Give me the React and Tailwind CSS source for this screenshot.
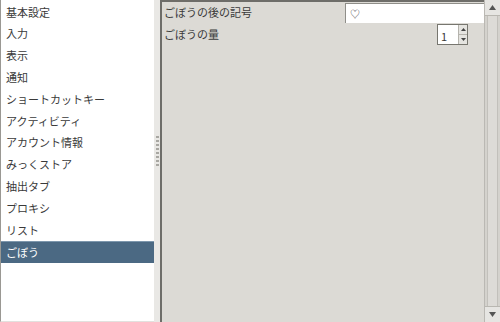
import { ChevronUp, ChevronDown } from "lucide-react";

const items = [
  "基本設定",
  "入力",
  "表示",
  "通知",
  "ショートカットキー",
  "アクティビティ",
  "アカウント情報",
  "みっくストア",
  "抽出タブ",
  "プロキシ",
  "リスト",
  "ごぼう",
];

function Arrow({ up }) {
  return (
    <svg width="7" height="5" viewBox="0 0 7 5">
      {up ? (
        <polygon points="0,5 7,5 3.5,0" fill="#555" />
      ) : (
        <polygon points="0,0 7,0 3.5,5" fill="#555" />
      )}
    </svg>
  );
}

export default function App() {
  const selected = "ごぼう";

  return (
    <div
      className="flex w-[500px] h-[322px] bg-[#dcdad5] text-[11px] text-[#3a3a3a] overflow-hidden"
      style={{ fontFamily: '"Noto Sans CJK JP", "Noto Sans", sans-serif' }}
    >
      {/* sidebar list */}
      <div className="w-[154px] h-full bg-white border-l border-[#9a9893] border-b border-b-[#e2e1de] pt-[1px] flex flex-col">
        {items.map((it) => (
          <div
            key={it}
            className={`h-[21.8px] shrink-0 flex items-center pl-[5px] ${
              it === selected ? "bg-[#4b6983] text-white border-t border-[#7d97ad]" : ""
            }`}
          >
            {it}
          </div>
        ))}
      </div>

      {/* splitter */}
      <div className="w-[6px] h-full bg-[#e9e8e5] flex items-center justify-center">
        <div className="flex flex-col gap-[2px] mt-[-20px]">
          {Array.from({ length: 8 }).map((_, i) => (
            <div key={i} className="w-[3px] h-[2px] bg-[#a8a7a2]" />
          ))}
        </div>
      </div>

      {/* settings pane */}
      <div className="flex-1 h-full border-l-2 border-t-2 border-[#6e6d69] bg-[#dcdad5] flex flex-col">
        <div className="h-[21px] flex items-center">
          <span className="pl-[2px] w-[183px]">ごぼうの後の記号</span>
          <div className="flex-1 h-[20px] bg-white border-l border-t border-[#8f8e89] flex items-center pl-[4px] text-[10px]">
            ♡
          </div>
        </div>
        <div className="h-[22px] flex items-center">
          <span className="pl-[2px] w-[275px]">ごぼうの量</span>
          <div className="w-[31px] h-[21px] bg-white border border-[#77766f] flex">
            <div className="flex-1 pl-[3px] pt-[3px] text-[11px]">1</div>
            <div className="w-[9px] border-l border-[#b5b3ad] bg-[#e5e4e0] flex flex-col">
              <div className="flex-1 flex items-center justify-center border-b border-[#b5b3ad]">
                <svg width="5" height="3" viewBox="0 0 5 3"><polygon points="0,3 5,3 2.5,0" fill="#444" /></svg>
              </div>
              <div className="flex-1 flex items-center justify-center">
                <svg width="5" height="3" viewBox="0 0 5 3"><polygon points="0,0 5,0 2.5,3" fill="#444" /></svg>
              </div>
            </div>
          </div>
        </div>
      </div>

      {/* scrollbar */}
      <div className="w-[16px] h-full bg-[#d4d2cd] border-l border-[#bab8b3] flex flex-col">
        <div className="h-[16px] bg-[#e6e5e2] border-b border-[#b9b7b1] flex items-center justify-center">
          <Arrow up />
        </div>
        <div className="flex-1 mx-[2px] border-x border-[#c2c0bb] bg-[#dddbd7]" />
        <div className="h-[16px] bg-[#e6e5e2] border-t border-[#b9b7b1] flex items-center justify-center">
          <Arrow />
        </div>
      </div>
    </div>
  );
}
